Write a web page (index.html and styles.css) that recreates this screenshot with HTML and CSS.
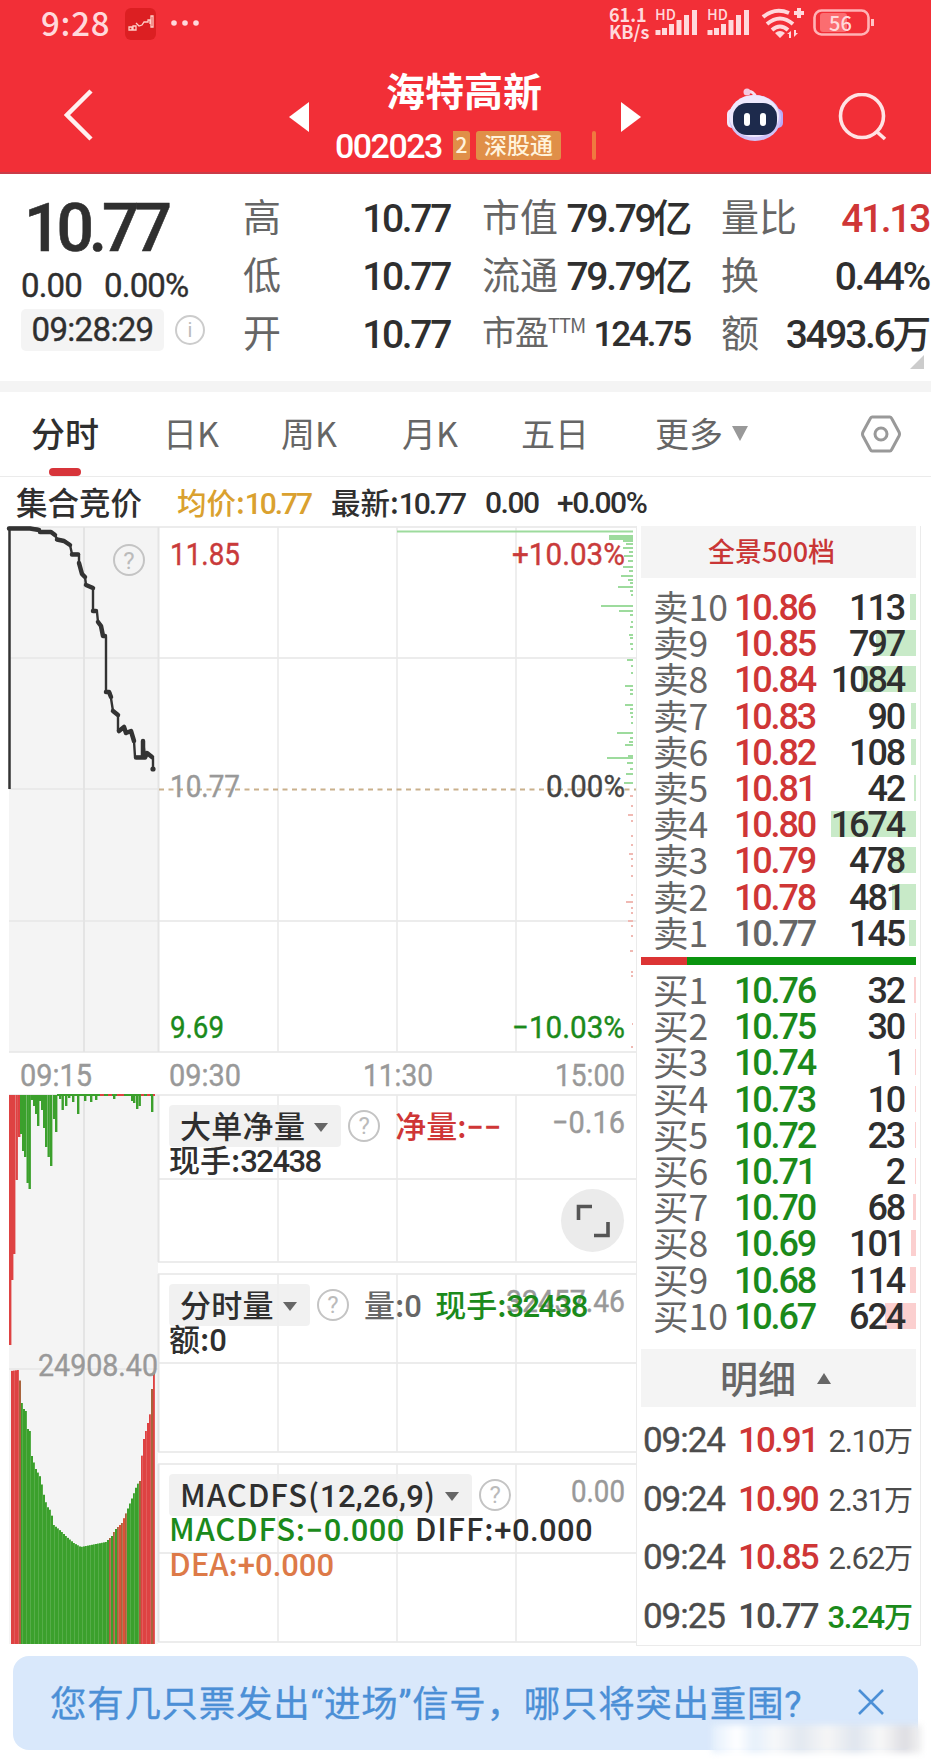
FILE: index.html
```
<!DOCTYPE html>
<html lang="zh-CN">
<head>
  <meta charset="utf-8">
  <title>海特高新 002023</title>
  <link rel="stylesheet" href="styles.css">
</head>
<body>
  <header>
    <div class="status">
      <span class="clock">9:28</span>
      <svg class="app" width="31" height="32" viewBox="0 0 31 32"><rect width="31" height="32" rx="6" fill="#dc1f22"/><path d="M4 19h3v3h-3zM8 18h3v4h-3zM11 15l3 3 3-1 2-3h4v-2h2v4M26 8v11h2V8z" fill="none" stroke="#ffd0c8" stroke-width="1.3"/></svg>
      <svg class="dots" width="28" height="6"><circle cx="3" cy="3" r="2.8"/><circle cx="14" cy="3" r="2.8"/><circle cx="25" cy="3" r="2.8"/></svg>
      <span class="speed">61.1<br>KB/s</span>
      <svg class="signal" width="44" height="30" viewBox="0 0 44 30"><text x="0" y="12">HD</text><path d="M3 27v-5M9.500 27v-7M16.500 27v-11M24 27v-15M31.500 27v-20M39.500 27v-25"/></svg>
      <svg class="signal" width="44" height="30" viewBox="0 0 44 30"><text x="0" y="12">HD</text><path d="M3 27v-5M9.500 27v-7M16.500 27v-11M24 27v-15M31.500 27v-20M39.500 27v-25"/></svg>
      <svg class="wifi" width="44" height="32" viewBox="0 0 44 32"><path d="M2 10q12-10 26-4M6 17q13-11 26 0M11 23q8-7 16 0M38 1v10M33 6h10" fill="none" stroke="#ffd9dc" stroke-width="4"/><path d="M14 26q5-4 10 0l-5 5zM26 27l4-3v7h-2v-4zM37 26l-4 4v-7h2v3z" fill="#ffd9dc"/></svg>
      <svg class="battery" width="62" height="28" viewBox="0 0 62 28"><rect x="7" y="4" width="27" height="19" rx="3" fill="#fb6d70"/><rect x="1.500" y="1.500" width="54" height="24" rx="7" fill="none" stroke="#ffb3b5" stroke-width="2.600"/><path d="M59.500 10v7" stroke="#ffc4c6" stroke-width="3"/><text x="16" y="21.500">56</text></svg>
    </div>
    <div class="nav">
      <svg class="back" width="30" height="54" viewBox="0 0 30 54"><path d="M27 3L3 27L27 51" fill="none" stroke="#fff0f0" stroke-width="4.500"/></svg>
      <svg class="prev" width="21" height="30"><path d="M0 15L20 0V30Z" fill="#fff"/></svg>
      <div class="stock">
        <h1>海特高新</h1>
        <p><span class="n code">002023</span><span class="tag cut">2</span><span class="tag">深股通</span><span class="tag edge"></span></p>
      </div>
      <svg class="next" width="20" height="30"><path d="M0 0L20 15L0 30Z" fill="#fff"/></svg>
      <svg class="robot" width="58" height="54" viewBox="0 0 58 54">
        <path d="M20 4q8-2 10 6" fill="none" stroke="#f6dff0" stroke-width="3"/><circle cx="21" cy="4" r="3.500" fill="#f3c9e0"/>
        <rect x="1" y="21" width="10" height="19" rx="5" fill="#f5e6f8"/><rect x="47" y="21" width="10" height="19" rx="5" fill="#b9aaf5"/>
        <ellipse cx="29" cy="30" rx="26" ry="23" fill="#cfc3f7"/><ellipse cx="28" cy="28" rx="25" ry="21" fill="#eee9fd"/>
        <rect x="7" y="15" width="44" height="32" rx="14" fill="#1d2a4c"/>
        <rect x="18" y="25" width="6" height="13" rx="3" fill="#fff"/><rect x="34" y="25" width="6" height="13" rx="3" fill="#fff"/>
      </svg>
      <svg class="search" width="50" height="50" viewBox="0 0 50 50"><g fill="none" stroke="#ffe3e4" stroke-width="3.600"><circle cx="24" cy="23" r="21.500"/><path d="M38 38l9 8"/></g></svg>
    </div>
  </header>

  <section class="quote">
    <div class="last">
      <div class="n price">10.77</div>
      <div class="n change"><span>0.00</span><span>0.00%</span></div>
      <div class="time"><span class="n">09:28:29</span><svg width="30" height="30"><circle cx="15" cy="15" r="14" fill="none" stroke="#ccc" stroke-width="2"/><text x="15" y="22">i</text></svg></div>
    </div>
    <dl class="c1"><dt>高</dt><dd class="n">10.77</dd><dt>低</dt><dd class="n">10.77</dd><dt>开</dt><dd class="n">10.77</dd></dl>
    <dl class="c2"><dt>市值</dt><dd class="n">79.79<b>亿</b></dd><dt>流通</dt><dd class="n">79.79<b>亿</b></dd><dt class="pe">市盈<sup>TTM</sup></dt><dd class="n small">124.75</dd></dl>
    <dl class="c3"><dt>量比</dt><dd class="n red">41.13</dd><dt>换</dt><dd class="n">0.44%</dd><dt>额</dt><dd class="n">3493.6<b>万</b></dd></dl>
    <i class="corner"></i>
  </section>

  <nav class="tabs">
    <a class="on">分时</a><a>日K</a><a>周K</a><a>月K</a><a>五日</a><a>更多<i class="down"></i></a>
    <svg width="40" height="38" viewBox="0 0 40 38"><g fill="none" stroke="#999" stroke-width="3"><path d="M11 2H29Q30 2 31 4L38 17Q39 19 38 21L31 34Q30 36 29 36H11Q10 36 9 34L2 21Q1 19 2 17L9 4Q10 2 11 2Z"/><circle cx="20" cy="19" r="6"/></g></svg>
  </nav>

  <div class="legend">
    <span class="call">集合竞价</span><span class="avg">均价:<i class="n">10.77</i></span><span class="now">最新:<i class="n">10.77</i></span><span class="n diff">0.00</span><span class="n">+0.00%</span>
  </div>

  <main>
    <div class="chart">
      <svg id="plot" width="636" height="1121" viewBox="0 526 636 1121"></svg>
      <div class="panes">
        <div class="pane">
          <div class="row"><span class="chip">大单净量<i class="down"></i></span><i class="help">?</i><span class="red v1">净量:<i class="n">−−</i></span></div>
          <div class="row2">现手:<i class="n">32438</i></div>
        </div>
        <div class="pane second">
          <div class="row"><span class="chip">分时量<i class="down"></i></span><i class="help">?</i><span class="v2">量:<i class="n">0</i></span><span class="green v3">现手:<i class="n">32438</i></span></div>
          <div class="row2">额:<i class="n">0</i></div>
        </div>
        <div class="pane third">
          <div class="row"><span class="chip">MACDFS(<i class="n">12,26,9</i>)<i class="down"></i></span><i class="help">?</i></div>
          <div class="row2"><span class="green">MACDFS:<i class="n">−0.000</i></span><span class="dif">DIFF:<i class="n">+0.000</i></span></div>
          <div class="row2 orange">DEA:<i class="n">+0.000</i></div>
        </div>
      </div>
      <div class="full"><svg width="34" height="34" viewBox="0 0 34 34"><path d="M2.500 16V2.500H16M32 18V31.500H18" fill="none" stroke="#555" stroke-width="3.600"/></svg></div>
    </div>

    <aside>
      <div class="depth">全景500档</div>
      <div class="book" id="sell"></div>
      <div class="ratio"><i></i></div>
      <div class="book" id="buy"></div>
      <div class="detail">明细<i class="up"></i></div>
      <div class="ticks">
        <div><span class="n">09:24</span><span class="n red">10.91</span><em><i class="n">2.10</i>万</em></div>
        <div><span class="n">09:24</span><span class="n red">10.90</span><em><i class="n">2.31</i>万</em></div>
        <div><span class="n">09:24</span><span class="n red">10.85</span><em><i class="n">2.62</i>万</em></div>
        <div><span class="n">09:25</span><span class="n">10.77</span><em class="green strong"><i class="n">3.24</i>万</em></div>
      </div>
    </aside>
  </main>

  <div class="banner">
    <span>您有几只票发出“进场”信号，哪只将突出重围?</span>
    <svg width="28" height="28" viewBox="0 0 28 28"><path d="M2 2L26 26M26 2L2 26" stroke="#4b8fd6" stroke-width="2.600"/></svg>
    <i class="smudge"></i>
  </div>
  <script src="main.js"></script>
</body>
</html>
```
FILE: styles.css
```
* {
  box-sizing: border-box;
}
body {
  margin: 0;
  width: 931px;
  height: 1761px;
  overflow: hidden;
  background: #fff;
  color: #2f2f2f;
  font-family: "Noto Sans CJK SC", sans-serif;
}
h1, p, dl, dd {
  margin: 0;
}
i, em {
  font-style: normal;
}
svg {
  display: block;
  flex: none;
}
.n {
  font-family: Roboto, "Noto Sans CJK SC", sans-serif;
  font-weight: 500;
  letter-spacing: -.06em;
}
.red {
  color: #cf3636 !important;
}
.green {
  color: #1b8a1b !important;
}
.orange {
  color: #dd7a48;
}

/* header */
header {
  height: 174px;
  background: #f22f37;
  border-bottom: 2px solid #c93c48;
}
.status {
  display: flex;
  height: 48px;
  padding-left: 41px;
  color: #ffd9dc;
}
.clock {
  width: 84px;
  font: 500 33px/44px "Noto Sans CJK SC", sans-serif;
  letter-spacing: .8px;
}
.app {
  margin-top: 8px;
}
.dots {
  margin: 20px 0 0 15px;
  fill: #ffd9dc;
}
.speed {
  width: 46px;
  margin: 6px 0 0 410px;
  font: 700 18px/17px "Noto Sans CJK SC", sans-serif;
}
.signal {
  margin: 8px 8px 0 0;
}
.signal path {
  stroke: #ffd9dc;
  stroke-width: 5;
}
.signal text {
  fill: #ffd9dc;
  font: 500 14.500px "Noto Sans CJK SC", sans-serif;
}
.wifi {
  margin: 7px 0 0 2px;
}
.battery {
  margin: 9px 0 0 8px;
}
.battery text {
  fill: #ffd9dc;
  font: 500 20px "Noto Sans CJK SC", sans-serif;
}
.nav {
  display: flex;
  height: 124px;
}
.back {
  margin: 40px 0 0 64px;
}
.prev {
  margin: 54px 0 0 195px;
}
.stock {
  width: 312px;
  padding: 15px 0 0 26px;
  color: #fff;
}
.stock h1 {
  padding-left: 50px;
  font-size: 39px;
  font-weight: 700;
  line-height: 52px;
}
.stock p {
  display: flex;
  height: 30px;
  margin-top: 16px;
}
.code {
  width: 118px;
  margin-left: -1px;
  font-size: 34px;
  letter-spacing: -.045em;
  line-height: 30px;
}
.tag {
  width: 85px;
  height: 29px;
  margin-right: 31px;
  border-radius: 3px;
  background: #e08f48;
  color: #fff3dc;
  font-size: 23px;
  font-weight: 500;
  line-height: 27px;
  text-align: center;
}
.tag.cut {
  width: 17px;
  margin-right: 6px;
  border-radius: 0 3px 3px 0;
  font-size: 21px;
}
.tag.edge {
  width: 4px;
  margin: 0;
  background: #f0793f;
}
.next {
  margin: 54px 0 0 -1px;
}
.robot {
  margin: 40px 0 0 85px;
}
.search {
  margin: 45px 0 0 54px;
}

/* quote */
.quote {
  display: flex;
  position: relative;
  height: 218px;
  border-bottom: 11px solid #f4f4f4;
}
.last {
  width: 243px;
  padding-left: 21px;
}
.price {
  height: 80px;
  padding: 15px 0 0 3px;
  font-size: 66px;
  letter-spacing: -.077em;
  line-height: 80px;
  -webkit-text-stroke: .6px;
}
.change {
  display: flex;
  gap: 22px;
  margin-top: 15px;
  font-size: 33px;
  font-weight: 400;
  letter-spacing: -.025em;
  line-height: 34px;
  -webkit-text-stroke: .4px;
}
.time {
  display: flex;
  align-items: center;
  gap: 11px;
  margin-top: 6px;
}
.time span {
  width: 143px;
  height: 42px;
  border-radius: 5px;
  background: #f4f4f4;
  font-size: 33px;
  font-weight: 400;
  letter-spacing: -.02em;
  line-height: 42px;
  text-align: center;
  -webkit-text-stroke: .4px;
}
.time text {
  fill: #bbb;
  font: 20px Roboto, sans-serif;
  text-anchor: middle;
}
.quote dl {
  display: grid;
  grid-template-columns: 38px 1fr;
  grid-auto-rows: 58px;
  height: 174px;
  margin-top: 14px;
  line-height: 58px;
}
.quote dt {
  margin-top: -2px;
  color: #666;
  font-size: 38px;
  white-space: nowrap;
}
.quote dd {
  padding-top: 2px;
  font-size: 39px;
  text-align: right;
  white-space: nowrap;
}
.quote dd b {
  font-weight: 500;
  margin-left: -1px;
}
.quote .c1 {
  width: 207px;
}
.quote .c2 {
  width: 208px;
  margin-left: 32px;
}
.quote .c3 {
  width: 208px;
  margin-left: 31px;
}
.quote .pe {
  font-size: 34px;
  letter-spacing: -1px;
}
.pe sup {
  font-size: 20px;
  line-height: 0;
}
.quote .small {
  font-size: 35px;
}
.corner {
  position: absolute;
  right: 7px;
  bottom: 12px;
  border-left: 14px solid transparent;
  border-bottom: 14px solid #ccc;
}

/* tabs */
.tabs {
  display: grid;
  grid-template-columns: 131px 118px 121px 119px 134px 206px 40px;
  align-items: center;
  height: 85px;
  padding-left: 32px;
  border-bottom: 1px solid #ebebeb;
  color: #666;
  font-size: 34px;
  line-height: 82px;
}
.tabs a {
  height: 84px;
}
.tabs a.on {
  position: relative;
  left: -1px;
  color: #2f2f2f;
  font-weight: 500;
}
.tabs a.on::after {
  content: "";
  position: absolute;
  left: 18px;
  bottom: 0;
  width: 32px;
  height: 8px;
  border-radius: 4px;
  background: #d7343a;
}
.down {
  display: inline-block;
  border: 7px solid transparent;
  border-top: 9px solid #666;
  border-bottom: 0;
  margin-left: 9px;
  vertical-align: 6px;
}
.tabs .down {
  border-width: 15px 8px 0;
  border-top-color: #999;
}

.legend {
  display: flex;
  height: 49px;
  padding-left: 16px;
  font-size: 29.500px;
  font-weight: 500;
  line-height: 49px;
}
.call {
  width: 161px;
  font-size: 31.500px;
}
.avg {
  width: 154px;
  color: #daa12f;
}
.now {
  width: 154px;
}
.legend .n {
  font-size: 30px;
  letter-spacing: -.05em;
}
.legend > .n {
  line-height: 52px;
}
.legend i.n {
  letter-spacing: -.07em;
}
.diff {
  width: 72px;
}

/* charts */
main {
  display: flex;
  height: 1121px;
}
.chart {
  display: grid;
  width: 636px;
  position: relative;
}
#plot, .panes {
  grid-area: 1 / 1;
}
#plot text {
  font-family: Roboto, sans-serif;
  font-size: 31px;
}
.panes {
  z-index: 1;
  padding: 569px 0 0 169px;
  font-size: 31px;
}
.pane {
  height: 179px;
  padding-top: 10px;
  font-weight: 500;
}
.pane.second, .pane.third {
  height: 190px;
}
.row {
  display: flex;
  align-items: center;
  height: 42px;
  line-height: 40px;
  white-space: nowrap;
}
.chip {
  height: 42px;
  padding: 0 13px 0 11px;
  border-radius: 4px;
  background: rgba(238, 238, 238, .85);
}
.pane .chip {
  letter-spacing: .3px;
}
.pane .n {
  font-size: 31px;
  letter-spacing: -.05em;
}
.pane .v1 .n {
  letter-spacing: 0;
}
.pane.third .chip {
  letter-spacing: 1px;
}
.pane.third .chip .n {
  letter-spacing: .3px;
}
.third .row2 {
  letter-spacing: .8px;
}
.pane.third .row2 .n {
  letter-spacing: .4px;
}
.pane.third .orange {
  letter-spacing: 0;
}
.pane.third .orange .n {
  letter-spacing: 0;
}
.help {
  width: 32px;
  height: 32px;
  margin: 0 15px 0 7px;
  border: 2px solid #c4c4c4;
  border-radius: 50%;
  color: #bbb;
  font: 24px/28px Roboto, sans-serif;
  text-align: center;
}
.row2 {
  height: 35px;
  line-height: 23px;
  white-space: nowrap;
}
.v2 {
  color: #666;
  margin-right: 15px;
}
.dif {
  margin-left: 10px;
}
.full {
  position: absolute;
  left: 561px;
  top: 663px;
  z-index: 2;
  display: flex;
  align-items: center;
  justify-content: center;
  width: 63px;
  height: 63px;
  border-radius: 50%;
  background: #ebebeb;
}

/* order book */
aside {
  width: 285px;
  height: 1120px;
  padding: 0 4px 0 4px;
  border: 1px solid #ebebeb;
  border-top: 0;
}
.depth {
  height: 52px;
  margin-bottom: 11px;
  background: #f4f4f4;
  color: #c93636;
  font-size: 27px;
  font-weight: 500;
  line-height: 50px;
  padding-right: 14px;
  text-align: center;
}
.book {
  height: 368px;
}
.book div {
  display: grid;
  grid-template-columns: 81px 82px 1fr;
  position: relative;
  height: 36.200px;
  padding: 0 12px 0 12px;
  font-size: 35.500px;
  line-height: 34px;
  color: #666;
  white-space: nowrap;
}
.book .n {
  position: relative;
  font-size: 36px;
  line-height: 38px;
}
.book .n:last-child {
  color: #2f2f2f;
  text-align: right;
}
.book u {
  position: absolute;
  right: 0;
  top: 5px;
  height: 26px;
  background: #c8eac8;
}
#buy u {
  background: #fbcfcf;
}
.ratio {
  height: 8px;
  background: #0a940f;
}
.ratio i {
  display: block;
  width: 46px;
  height: 8px;
  background: #dc3434;
}
#buy {
  height: 384px;
  padding-top: 7px;
}
.detail {
  height: 58px;
  background: #f4f4f4;
  color: #666;
  font-size: 38px;
  font-weight: 500;
  line-height: 55px;
  padding-left: 79px;
}
.up {
  display: inline-block;
  margin-left: 21px;
  border: 7px solid transparent;
  border-top: 0;
  border-bottom: 11px solid #666;
  vertical-align: 9px;
}
.ticks {
  padding-top: 5px;
  color: #4c4c4c;
}
.ticks div {
  display: grid;
  grid-template-columns: 95px 83px 1fr;
  height: 58.600px;
  padding: 0 3px 0 2px;
  font-size: 35px;
  line-height: 58px;
  white-space: nowrap;
}
.ticks span.n {
  letter-spacing: -.055em;
}
.ticks span.n:first-child {
  font-weight: 400;
  letter-spacing: -.03em;
  -webkit-text-stroke: .4px;
}
.ticks em {
  font-size: 29px;
  line-height: 55px;
  text-align: right;
}
.ticks em .n {
  font-size: 31px;
  font-weight: 400;
  letter-spacing: -.04em;
}
.ticks .strong, .ticks .strong .n {
  font-weight: 500;
}

.banner {
  display: flex;
  align-items: center;
  justify-content: space-between;
  position: relative;
  width: 905px;
  height: 94px;
  margin: 9px 0 0 13px;
  padding: 0 33px 3px 37px;
  border-radius: 16px;
  background: #d9e8fb;
  color: #4b8fd6;
  font: 36.500px Roboto, "Noto Sans CJK SC", sans-serif;
  letter-spacing: .7px;
  white-space: nowrap;
  -webkit-text-stroke: .3px;
}
.smudge {
  position: absolute;
  right: -4px;
  bottom: -3px;
  width: 210px;
  height: 28px;
  background: linear-gradient(90deg, #e4effc, #fff 12%, #e6f0fb 20%, #f7f8fa 30%, #e2e8f0 42%, #f6f6f6 55%, #dfe5ee 68%, #f8f8f8 80%, #dddde2 92%, #f3f3f3);
  filter: blur(3px);
}
```
FILE: main.js
```
const NS = 'http://www.w3.org/2000/svg';
const plot = document.getElementById('plot');

function add(name, attrs, text) {
  const el = document.createElementNS(NS, name);
  for (const k in attrs) el.setAttribute(k, attrs[k]);
  if (text) el.textContent = text;
  plot.appendChild(el);
  return el;
}
const rect = (x, y, w, h, fill) => add('rect', { x, y, width: w, height: h, fill });
const line = (d, stroke, w) => add('path', { d, stroke, fill: 'none', 'stroke-width': w || 1.5 });

// call auction area and the grid
rect(9, 527, 149, 525, '#f4f4f4');
rect(9, 1095, 149, 549, '#f4f4f4');
line('M9 527H637M9 658H637M9 789H158M9 921H637M9 1052H637M9 1095H637M158 1179H637M158 1262H637M158 1274H637M158 1363H637M158 1452H637M158 1464H637M158 1553H637M158 1642H637M9 1369H158', '#e6e6e6');
line('M84 527V1052M84 1095V1644M158.500 527V1052M158.500 1095V1262M158.500 1274V1452M158.500 1464V1642', '#e4e4e4', 2);
[278, 397, 516].forEach(x => line(`M${x} 527V1052M${x} 1095V1262M${x} 1274V1452M${x} 1464V1642`, '#e9e9e9'));
add('path', { d: 'M159 789.500H636', stroke: '#c9b08c', 'stroke-width': 2, 'stroke-dasharray': '5 4.500' });

// resting volume by price
[[531.5, 236, 2], [536, 24, 5], [541, 10], [544, 7], [548, 10], [552, 4], [556, 9], [561, 5], [567, 10], [571, 4], [576, 12], [580, 5], [583, 3], [587, 15], [591, 3], [595, 2], [606, 32], [611, 14], [615, 3], [622, 2], [627, 3], [635, 4], [638, 3], [644, 3], [649, 2], [660, 6], [666, 2], [673, 2], [686, 8], [690, 3], [694, 3], [705, 8], [709, 3], [713, 3], [717, 2], [723, 2], [733, 16], [738, 3], [742, 4], [745, 8], [756, 5], [758, 26], [763, 6], [769, 3], [774, 7], [783, 9]]
  .forEach(b => rect(633 - b[1], b[0] - 1, b[1], b[2] || 2, '#9ddb9d'));
[[796, 3], [806, 2], [815, 5], [821, 2], [836, 2], [845, 2], [854, 4], [859, 2], [866, 2], [876, 2], [895, 2], [902, 7], [908, 2], [913, 2], [921, 5], [926, 2], [936, 2], [951, 3], [972, 2], [976, 2], [1024, 1], [1047, 2]]
  .forEach(b => rect(633 - b[1], b[0] - 1, b[1], 2, '#f0b9b3'));

// matched price before the open
line('M9.500 528V789', '#333', 2.5);
add('path', { d: 'M9 528H30L38 529L41 531.500L51 532L55 535L57 539L65 541L70 545L72 554H79V563L82 573L85 577L86 585L93 588V611L97 612L98 622L101 625L103 636L106 637V692H110L113 711L118 715V731L124 727L126 733L131 731L134 741L135 757H143V741L145 757L147 753L153 758V769', fill: 'none', stroke: '#333', 'stroke-width': 2.4, 'stroke-linejoin': 'round', 'stroke-linecap': 'round' });
add('path', { d: 'M9 528.500H30L39 530M40 532H51L55 535M57 539.500L64 541L70 545M72 554.500H78M79 563L82 574L85 577M86 585L93 588M93 611H96M98 622L101 626L103 636H105M106 692H109L111 697M113 711L118 715M119 731L124 727L126 733L131 731L134 741M136 757.500H145L147 753L152 757M143 741V757', fill: 'none', stroke: '#333', 'stroke-width': 4.5, 'stroke-linecap': 'round', 'stroke-linejoin': 'round' });
add('circle', { cx: 153, cy: 769, r: 2.6, fill: '#333' });

const RED = '#de4242', GREEN = '#3ba02c', MIX = '#a8633c';
// net volume, hanging from the top
[[9, 1345], [11, 1280], [13, 1254], [15.5, 1180], [18, 1137]].forEach(b => rect(b[0], 1095, 2.4, b[1] - 1095, RED));
[[20, 1134], [22, 1151], [24, 1157], [26.500, 1183], [28.500, 1189], [31, 1100], [33, 1106], [35, 1114], [37, 1126], [39, 1101], [41, 1110], [43, 1128], [45, 1147], [47.5, 1157], [50, 1166], [53, 1119], [55, 1132], [59, 1099], [61.5, 1110], [65, 1106], [68, 1098], [72, 1102], [77, 1114], [84, 1101], [90, 1102], [95, 1100], [113, 1099], [131, 1101], [133, 1103], [136, 1109], [138.5, 1106], [151, 1112]]
  .forEach(b => rect(b[0], 1095, 2.4, b[1] - 1095, GREEN));
rect(57, 1094, 98, 2, GREEN);
line('M100 1095H104M108 1095H112M117 1095H124M141 1095H144M147 1095H150M153 1095H155', RED, 2);

// unmatched volume, 2px bars between the sampled tops
const tops = [[10, 1371], [17, 1370], [18, 1363], [20, 1398], [22, 1408], [25, 1411], [27, 1429], [30, 1432], [31, 1456], [35, 1469], [40, 1478], [42, 1491], [46, 1506], [50, 1511], [53, 1525], [60, 1531], [66, 1537], [73, 1543], [80, 1547], [90, 1545], [105, 1542], [111, 1536], [114, 1530], [121, 1523], [126, 1511], [132, 1496], [136, 1485], [139, 1481], [142, 1443], [147, 1423], [150, 1410], [151, 1389], [153, 1372], [156, 1370]];
for (let x = 11; x < 155; x += 2) {
  let i = tops.findIndex(t => t[0] > x);
  const a = tops[i - 1], b = tops[i];
  const y = a[1] + (b[1] - a[1]) * (x - a[0]) / (b[0] - a[0]);
  let c = GREEN;
  if (x < 19 || (x > 139 && x < 150) || x > 152) c = RED;
  else if (x === 19 || x > 149 || (x > 107 && x < 127 && x % 4 === 1) || x === 139) c = MIX;
  else if (x > 117 && x < 127) c = '#dc5138';
  rect(x, y, 2, 1644 - y, c);
  if (x % 4 === 1) add('rect', { x: x + 1, y, width: .7, height: 1644 - y, fill: '#fff', opacity: .2 });
}

// axis labels
const label = (x, y, w, text, fill, end) => add('text', { x: end ? x - w : x, y, fill, textLength: w, lengthAdjust: 'spacingAndGlyphs', stroke: fill, 'stroke-width': .4 }, text);
label(170, 565, 70, '11.85', '#c93a3a');
label(625, 565, 113, '+10.03%', '#c93a3a', true);
label(170, 797, 70, '10.77', '#999');
label(625, 797, 79, '0.00%', '#444', true);
label(170, 1038, 54, '9.69', '#1b8a1b');
label(625, 1038, 113, '−10.03%', '#1b8a1b', true);
label(20, 1086, 72, '09:15', '#999');
label(169, 1086, 72, '09:30', '#999');
label(363, 1086, 70, '11:30', '#999');
label(625, 1086, 70, '15:00', '#999', true);
label(625, 1133, 73, '−0.16', '#999', true);
label(625, 1312, 119, '32457.46', '#999', true);
label(625, 1502, 54, '0.00', '#999', true);
label(38, 1376, 120, '24908.40', '#999');
add('circle', { cx: 129, cy: 560, r: 15, fill: 'none', stroke: '#c4c4c4', 'stroke-width': 2 });
add('text', { x: 129, y: 569, fill: '#bbb', style: 'font-size:24px;text-anchor:middle' }, '?');

function book(id, side, rows, unit) {
  document.getElementById(id).innerHTML = rows.map(r =>
    `<div><u style="width:${Math.max(1, r[2] * unit)}px"></u><span>${side}${r[0]}</span>` +
    `<span class="n ${r[1] === '10.77' ? '' : id === 'sell' ? 'red' : 'green'}">${r[1]}</span><span class="n">${r[2]}</span></div>`).join('');
}
book('sell', '卖', [[10, '10.86', 113], [9, '10.85', 797], [8, '10.84', 1084], [7, '10.83', 90], [6, '10.82', 108], [5, '10.81', 42], [4, '10.80', 1674], [3, '10.79', 478], [2, '10.78', 481], [1, '10.77', 145]], .0505);
book('buy', '买', [[1, '10.76', 32], [2, '10.75', 30], [3, '10.74', 1], [4, '10.73', 10], [5, '10.72', 23], [6, '10.71', 2], [7, '10.70', 68], [8, '10.69', 101], [9, '10.68', 114], [10, '10.67', 624]], .0505);
```
